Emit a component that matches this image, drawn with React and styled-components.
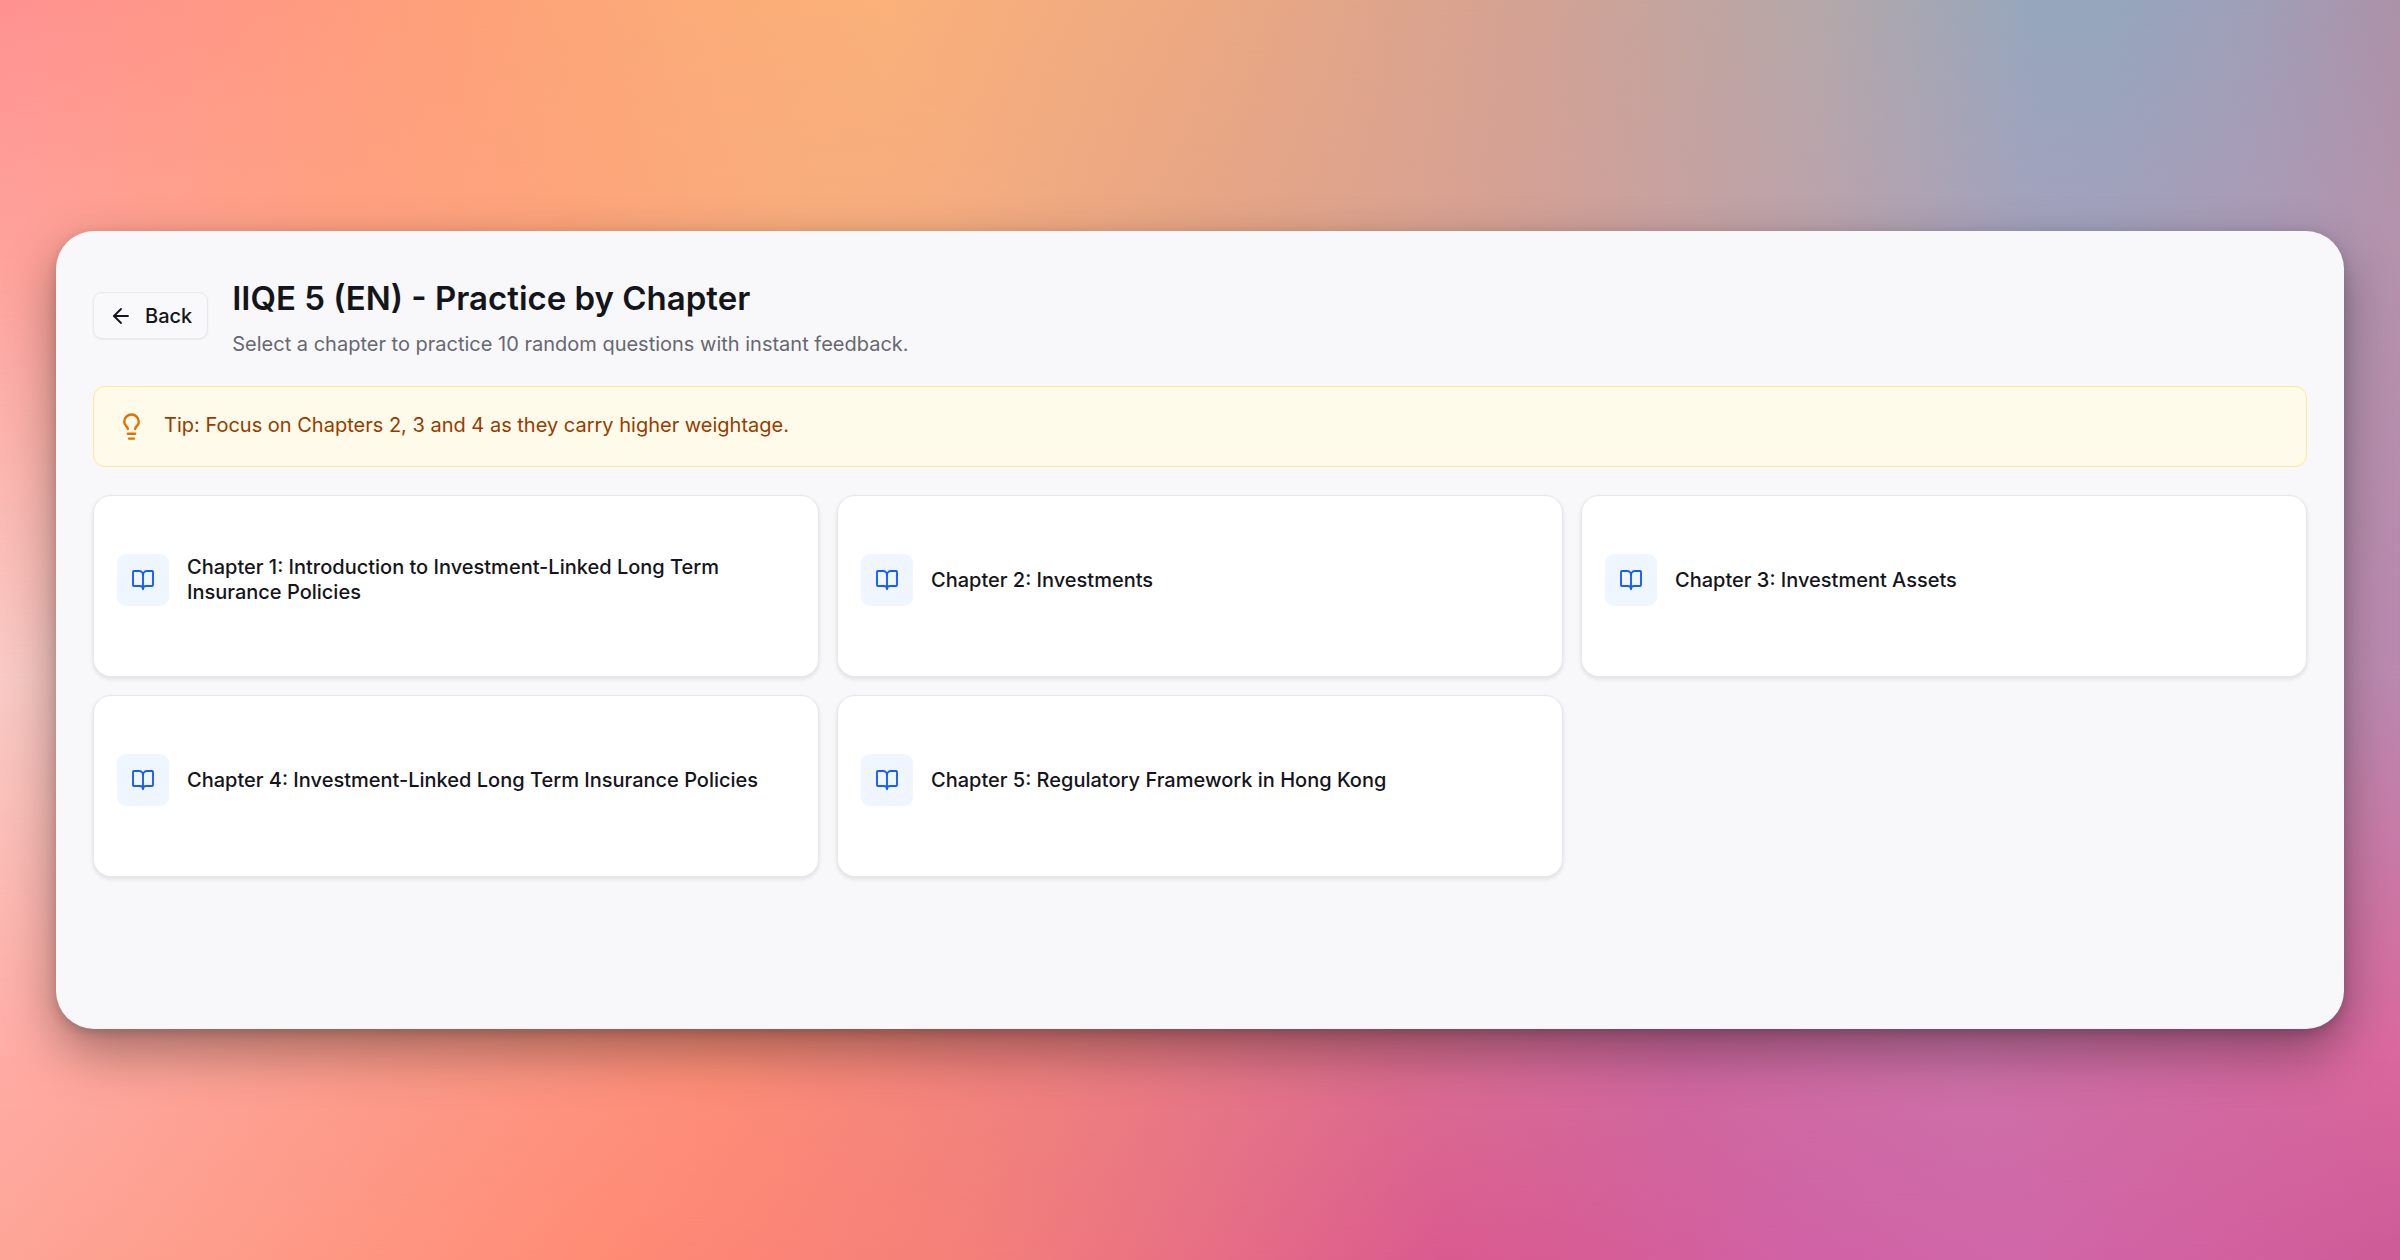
import React from 'react';
// styles
import styled, { createGlobalStyle } from 'styled-components';
// icons
import { ArrowLeft, BookOpen, Lightbulb } from 'lucide-react';

const chapters = [
  'Chapter 1: Introduction to Investment-Linked Long Term Insurance Policies',
  'Chapter 2: Investments',
  'Chapter 3: Investment Assets',
  'Chapter 4: Investment-Linked Long Term Insurance Policies',
  'Chapter 5: Regulatory Framework in Hong Kong',
];

const App = () => {
  return (
    <>
      <GlobalStyle />
      <Page>
        <Backdrop aria-hidden='true'>
          <Band
            $from='0%'
            $to='0%'
            $colors='#ff9292 0%, #ff9886 9%, #fea07a 18%, #fbae79 31%, #fbb17a 37%, #eda982 50%, #d3a294 64%, #b4a8aa 76%, #95a7be 85%, #95a7be 88%, #a09fb8 94%, #ac92a8 100%'
          />
          <Band
            $from='0%'
            $to='20%'
            $colors='#ffa29c 0%, #ffa182 14%, #fda47b 24%, #f7ad7e 34%, #f5ac80 39%, #e6a586 50%, #d3a096 64%, #bba2ac 76%, #a5a1bc 84%, #a4a0bb 88%, #ab9ab6 94%, #b592ac 100%'
          />
          <Band
            $from='20%'
            $to='54%'
            $colors='#f9cbc6 0%, #f7a58e 25%, #e69088 50%, #c990a8 80%, #c08fb2 97%, #bb89b0 100%'
          />
          <Band
            $from='54%'
            $to='84%'
            $colors='#ffaca5 0%, #fc9b8b 16%, #fd8e78 30%, #ee8080 44%, #dc6e8f 58%, #cf68a0 70%, #cd71a8 82%, #d3699f 94%, #db689d 100%'
          />
          <Band
            $from='84%'
            $to='100%'
            $colors='#fda597 0%, #fe9783 14%, #ff8b74 25%, #fc8576 31%, #f48079 40%, #e76f84 50%, #da5a8f 60%, #d75c94 65%, #d062a5 75%, #d066a8 84%, #d2609f 93%, #cc5b98 100%'
          />
        </Backdrop>
        <Panel>
          <Header>
            <BackButton type='button'>
              <ArrowLeft size={24} strokeWidth={1.8} />
              Back
            </BackButton>
            <div>
              <Title>IIQE 5 (EN) - Practice by Chapter</Title>
              <Subtitle>
                Select a chapter to practice 10 random questions with instant
                feedback.
              </Subtitle>
            </div>
          </Header>
          <Tip>
            <Lightbulb size={29} strokeWidth={2} />
            <p>Tip: Focus on Chapters 2, 3 and 4 as they carry higher weightage.</p>
          </Tip>
          <Chapters>
            {chapters.map((chapter, index) => (
              <ChapterCard key={chapter} href={`#chapter-${index + 1}`}>
                <IconTile>
                  <BookOpen size={24} strokeWidth={1.9} />
                </IconTile>
                <h2>{chapter}</h2>
              </ChapterCard>
            ))}
          </Chapters>
        </Panel>
      </Page>
    </>
  );
};

const GlobalStyle = createGlobalStyle`
  * {
    margin: 0;
    padding: 0;
    box-sizing: border-box;
  }
  body {
    font-family: 'Inter', sans-serif;
    font-size: 20px;
    color: #14151a;
    -webkit-font-smoothing: antialiased;
  }
`;

const Page = styled.div`
  position: relative;
  display: flex;
  min-height: 100vh;
  padding: 231px 56px;
`;

const Backdrop = styled.div`
  position: absolute;
  inset: 0;
  overflow: hidden;
`;

// each band fades in over the one above it
const Band = styled.div`
  position: absolute;
  inset: 0;
  background: linear-gradient(to right, ${(props) => props.$colors});
  mask-image: linear-gradient(
    to bottom,
    transparent ${(props) => props.$from},
    #000 ${(props) => props.$to}
  );
`;

const Panel = styled.main`
  position: relative;
  flex: 1;
  min-width: 0;
  padding: 37px;
  border-radius: 38px;
  background: #f8f8fb;
  box-shadow:
    0 22px 52px rgba(0, 0, 0, 0.36),
    0 4px 12px rgba(0, 0, 0, 0.16);
`;

const Header = styled.header`
  display: flex;
  align-items: center;
  gap: 24px;
  margin-bottom: 25px;
  padding-top: 2px;
`;

const BackButton = styled.button`
  display: flex;
  align-items: center;
  gap: 12px;
  height: 47px;
  padding: 0 15px;
  border: 1px solid #e9e9ed;
  border-radius: 9px;
  background: #f9f9fb;
  box-shadow: 0 1px 2px rgba(0, 0, 0, 0.06);
  color: inherit;
  font-family: inherit;
  font-size: 20px;
  font-weight: 500;
  cursor: pointer;
`;

const Title = styled.h1`
  font-size: 33px;
  font-weight: 600;
  line-height: 57px;
`;

const Subtitle = styled.p`
  color: #666870;
  line-height: 34px;
`;

const Tip = styled.div`
  display: flex;
  align-items: flex-start;
  gap: 18px;
  margin-bottom: 28px;
  padding: 25px 23px;
  border: 1px solid #fde995;
  border-radius: 12px;
  background: #fffbea;
  color: #973c00;
  p {
    line-height: 26px;
  }
  svg {
    flex-shrink: 0;
    color: #e17100;
  }
`;

const Chapters = styled.section`
  display: grid;
  grid-template-columns: repeat(3, 1fr);
  gap: 18px;
`;

const ChapterCard = styled.a`
  display: flex;
  align-items: center;
  gap: 18px;
  padding: 58px 23px 70px;
  border: 1px solid #e8e8ec;
  border-radius: 18px;
  background: #fff;
  box-shadow: 0 2px 4px rgba(0, 0, 0, 0.1);
  color: inherit;
  text-decoration: none;
  h2 {
    font-size: 20px;
    font-weight: 500;
    line-height: 25px;
  }
`;

const IconTile = styled.span`
  display: flex;
  flex-shrink: 0;
  align-items: center;
  justify-content: center;
  width: 52px;
  height: 52px;
  border-radius: 9px;
  background: #eff6ff;
  color: #155dfc;
`;

export default App;
